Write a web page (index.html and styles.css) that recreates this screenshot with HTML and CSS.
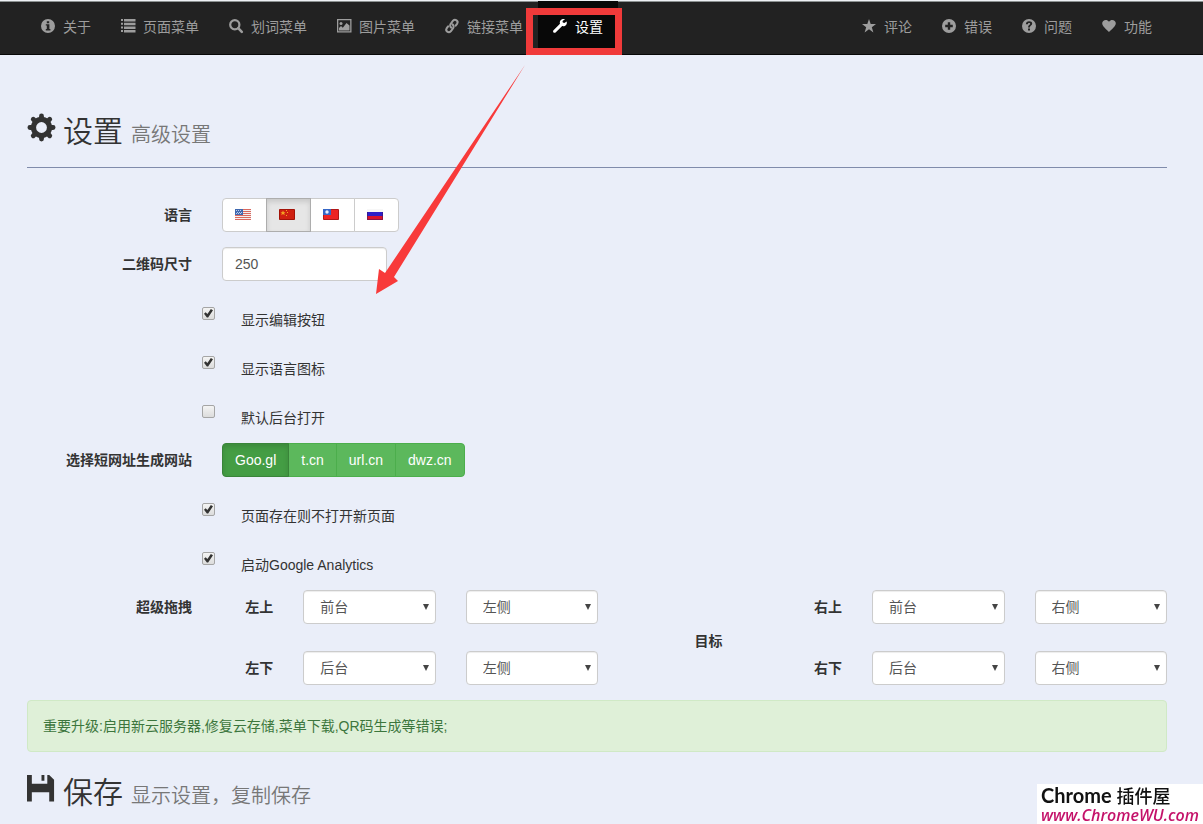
FILE: index.html
```html
<!DOCTYPE html>
<html lang="zh-CN">
<head>
<meta charset="utf-8">
<title>设置</title>
<link rel="stylesheet" href="styles.css">
</head>
<body>
<nav class="navbar">
  <div class="nav-list">
    <a class="nav-link" href="#about"><svg class="icon" viewBox="0 0 14 14"><path fill-rule="evenodd" d="M7 0a7 7 0 1 1 0 14A7 7 0 0 1 7 0zM5.800 2.200v2h2.400v-2zM4.800 5.300v1.200h1v3.600h-1v1.300h4.600v-1.300h-1V5.300z"/></svg>关于</a>
    <a class="nav-link" href="#page"><svg class="icon" viewBox="0 0 14 14"><path d="M0 0h2v2H0zM3 0h11.500v2.500H3zM0 3.700h2v2H0zM3 3.700h11.500v2.500H3zM0 7.400h2v2H0zM3 7.400h11.500v2.500H3zM0 11h2v2H0zM3 11h11.500v2.500H3z"/></svg>页面菜单</a>
    <a class="nav-link" href="#select"><svg class="icon" viewBox="0 0 14 14"><circle cx="5.800" cy="5.800" r="4.600" fill="none" stroke="currentColor" stroke-width="2.200"/><path d="M9.200 9.200l3.600 3.600" fill="none" stroke="currentColor" stroke-width="2.600" stroke-linecap="round"/></svg>划词菜单</a>
    <a class="nav-link" href="#image"><svg class="icon" viewBox="0 0 14 14"><path fill-rule="evenodd" d="M0 0h14.500v13.500H0zM1.300 1.300v10.900h11.900V1.300z"/><circle cx="4" cy="4.500" r="1.500"/><path d="M2 11.500V9l2-2 1.800 1.700L9.500 4l3 2.600v4.900z"/></svg>图片菜单</a>
    <a class="nav-link" href="#link"><svg class="icon" viewBox="0 0 14 14"><g fill="none" stroke="currentColor" stroke-width="2" stroke-linecap="round"><path d="M6.300 8.600C4.600 7.300 5 5.500 6 4.300l2-2.600c2.300-2.200 5.700.4 4.200 2.900L10.700 6.700"/><path d="M7.500 5.400C9.200 6.700 8.800 8.500 7.800 9.700l-2 2.600c-2.300 2.200-5.700-.4-4.200-2.900L3.100 7.300"/></g></svg>链接菜单</a>
    <a class="nav-link active" href="#settings"><svg class="icon" viewBox="0 0 14 14"><path d="M13.700 2.400l-2.400 1.700-1.500-.5-.3-1.600L12 .3C10.300-.4 8.200.2 7.300 1.800c-.6 1-.6 2-.3 3L.5 11.300c-.6.6-.6 1.500 0 2.100s1.500.6 2.100 0L9.200 7c2.600.8 5.300-1.400 4.500-4.600z"/></svg>设置</a>
  </div>
  <div class="nav-list">
    <a class="nav-link" href="#review"><svg class="icon" viewBox="0 0 14 14"><path d="M7 0l1.700 5H14L9.800 8.200l1.600 5.200L7 10.300l-4.400 3.100 1.600-5.200L0 5h5.300z"/></svg>评论</a>
    <a class="nav-link" href="#bug"><svg class="icon" viewBox="0 0 14 14"><path fill-rule="evenodd" d="M7 0a7 7 0 1 1 0 14A7 7 0 0 1 7 0zM5.800 3.200v2.600H3.200v2.400h2.600v2.600h2.400V8.200h2.600V5.800H8.200V3.200z"/></svg>错误</a>
    <a class="nav-link" href="#question"><svg class="icon" viewBox="0 0 14 14"><path fill-rule="evenodd" d="M7 0a7 7 0 1 1 0 14A7 7 0 0 1 7 0zM3.900 5.300h2c0-1 .5-1.400 1.200-1.400.8 0 1.100.4 1.100.9 0 1.100-2.200 1.300-2.200 3.600h1.900c0-1.500 2.300-1.800 2.300-3.800C10.200 3 8.900 2.200 7.100 2.200c-2 0-3.200 1.200-3.200 3.100zM6 9.500v2h2v-2z"/></svg>问题</a>
    <a class="nav-link" href="#feature"><svg class="icon" viewBox="0 0 14 14"><path d="M7 13C4.500 10.500.2 7.500.2 4.300.2 1 4.800-.3 7 2.700 9.200-.3 13.800 1 13.800 4.300 13.800 7.500 9.500 10.500 7 13z"/></svg>功能</a>
  </div>
</nav>

<main class="page">
  <h2 class="title ruled"><svg class="title-icon" viewBox="0 0 30 30"><g fill="none" stroke="currentColor"><circle cx="15" cy="15" r="8.300" stroke-width="5.400"/><path stroke-width="5" stroke-linecap="round" d="M15 5V3M15 25v2M5 15H3M25 15h2M7.900 7.900L6.500 6.500M22.100 22.100l1.400 1.400M7.900 22.100l-1.400 1.400M22.100 7.900l1.400-1.400"/></g></svg>设置<small>高级设置</small></h2>

  <form class="form">
    <div class="row">
      <span class="row-label" id="lang-label">语言</span>
      <div class="wide btn-group" role="group" aria-labelledby="lang-label">
        <button type="button" class="btn" aria-label="English"><svg class="flag" viewBox="0 0 16 11"><path fill="#f4efef" d="M0 0h16v11H0z"/><path stroke="#d9695f" d="M0 .5h16M0 2.500h16M0 4.500h16M0 6.500h16M0 8.500h16M0 10.500h16"/><path fill="#3f68b0" d="M0 0h8v6H0z"/><path stroke="#b9cdec" stroke-dasharray="1 1" d="M1 1.500h6M2 3.500h5M1 4.500h6"/></svg></button>
        <button type="button" class="btn pressed" aria-label="简体中文" aria-pressed="true"><svg class="flag" viewBox="0 0 16 11"><path fill="#cf2011" stroke="#a31207" d="M.5.500h15v10H.5z"/><path fill="#f5a623" d="M4 1.500l.8 1.700h1.700L5.200 4.300l.5 1.900L4 5.100 2.300 6.200l.5-1.900L1.500 3.200h1.700z"/><path fill="#f5a623" d="M7 1h1v1H7zM8 3h1v1H8zM7 6h1v1H7z"/></svg></button>
        <button type="button" class="btn" aria-label="繁體中文"><svg class="flag" viewBox="0 0 16 11"><path fill="#ed2424" stroke="#b01818" d="M.5.500h15v10H.5z"/><path fill="#3566c6" d="M0 0h8v6H0z"/><circle cx="4" cy="3" r="1.700" fill="#e8f0ff"/></svg></button>
        <button type="button" class="btn" aria-label="Русский"><svg class="flag" viewBox="0 0 16 11"><path fill="#f7f7f7" d="M0 0h16v3H0z"/><path fill="#2c20c8" d="M0 3h16v4H0z"/><path fill="#d8142c" d="M0 7h16v4H0z"/><path fill="none" stroke="#3c1460" stroke-opacity=".5" d="M.5 3v7.500h15V3"/></svg></button>
      </div>
    </div>
    <div class="row">
      <label class="row-label" for="qr">二维码尺寸</label>
      <div class="narrow"><input class="control" id="qr" type="text" value="250"></div>
    </div>
    <div class="row"><label class="wide check"><input type="checkbox" checked><span>显示编辑按钮</span></label></div>
    <div class="row"><label class="wide check"><input type="checkbox" checked><span>显示语言图标</span></label></div>
    <div class="row"><label class="wide check"><input type="checkbox"><span>默认后台打开</span></label></div>
    <div class="row">
      <span class="row-label" id="short-label">选择短网址生成网站</span>
      <div class="wide btn-group" role="group" aria-labelledby="short-label">
        <button type="button" class="btn green pressed" aria-pressed="true">Goo.gl</button>
        <button type="button" class="btn green">t.cn</button>
        <button type="button" class="btn green">url.cn</button>
        <button type="button" class="btn green">dwz.cn</button>
      </div>
    </div>
    <div class="row"><label class="wide check"><input type="checkbox" checked><span>页面存在则不打开新页面</span></label></div>
    <div class="row"><label class="wide check"><input type="checkbox" checked><span>启动Google Analytics</span></label></div>
    <div class="row">
      <span class="row-label">超级拖拽</span>
      <div class="drag">
        <label class="row-label corner" for="lt">左上</label>
        <div class="pick"><select class="control" id="lt"><option>前台</option><option>后台</option></select></div>
        <div class="pick"><select class="control" aria-label="左上位置"><option>左侧</option><option>右侧</option></select></div>
        <span class="target">目标</span>
        <label class="row-label corner right" for="rt">右上</label>
        <div class="pick"><select class="control" id="rt"><option>前台</option><option>后台</option></select></div>
        <div class="pick"><select class="control" aria-label="右上位置"><option>右侧</option><option>左侧</option></select></div>
        <label class="row-label corner" for="lb">左下</label>
        <div class="pick"><select class="control" id="lb"><option>后台</option><option>前台</option></select></div>
        <div class="pick"><select class="control" aria-label="左下位置"><option>左侧</option><option>右侧</option></select></div>
        <label class="row-label corner right" for="rb">右下</label>
        <div class="pick"><select class="control" id="rb"><option>后台</option><option>前台</option></select></div>
        <div class="pick"><select class="control" aria-label="右下位置"><option>右侧</option><option>左侧</option></select></div>
      </div>
    </div>
  </form>

  <div class="alert">重要升级:启用新云服务器,修复云存储,菜单下载,QR码生成等错误;</div>

  <h2 class="title"><svg class="title-icon" viewBox="0 0 30 30"><path fill-rule="evenodd" d="M0 1h5v9h16V1h2l5 5v22.500h-5V19H5v9.500H0zM15 1h3v6h-3z"/></svg>保存<small>显示设置，复制保存</small></h2>
</main>

<div class="frame"></div>
<svg class="arrow" viewBox="0 0 150 230"><path fill="#f83a3a" d="M149 1L18 213l4 4L0 230l3-25 6 4z"/></svg>
<div class="watermark">
  <div class="mark-name">Chrome <span>插件屋</span></div>
  <div class="mark-url">www.ChromeWU.com</div>
</div>
</body>
</html>
```

FILE: styles.css
```css
* { box-sizing: border-box; }

body {
  margin: 0;
  background: #eaeef9;
  color: #333;
  font: 14px/20px "Liberation Sans", "Noto Sans CJK SC", sans-serif;
}

button, input, select { font: inherit; color: inherit; margin: 0; }

/* navigation */
.navbar {
  display: flex;
  justify-content: space-between;
  padding: 0 36px 0 26px;
  background: #222;
  border-top: 1px solid #eef1f5;
  border-bottom: 1px solid #080808;
  box-shadow: inset 0 1px #8d9292;
}
.nav-list { display: flex; }
.nav-link {
  display: flex;
  align-items: center;
  gap: 8px;
  padding: 16px 15px 17px;
  color: #9d9d9d;
  text-decoration: none;
  white-space: nowrap;
}
.nav-link.active { background: #080808; color: #fff; }
.icon { width: 14px; height: 14px; margin-bottom: 2px; fill: currentColor; overflow: visible; }

/* headings */
.page { padding: 60px 36px 0 27px; }
.title {
  display: flex;
  align-items: baseline;
  margin: 0;
  font-size: 30px;
  line-height: 33px;
  font-weight: 350;
}
.title small { margin-left: 8px; font-size: 20px; color: #777; }
.title-icon {
  width: 29px;
  height: 29px;
  margin-right: 7px;
  align-self: flex-start;
  margin-top: -2px;
  fill: currentColor;
}
.ruled { padding-bottom: 15px; margin-bottom: 30px; border-bottom: 1px solid #808bab; }

/* form grid */
.form { margin: 0 -15px; }
.row {
  display: grid;
  grid-template-columns: repeat(12, minmax(0, 1fr));
  min-height: 34px;
  margin-bottom: 15px;
}
.row-label {
  grid-column: span 2;
  padding: 7px 15px 0 0;
  font-weight: 700;
  text-align: right;
  white-space: nowrap;
}
.wide { grid-column: 3 / -1; padding: 0 15px; }
.narrow { grid-column: span 2; padding: 0 15px; }

.control {
  display: block;
  width: 100%;
  height: 34px;
  padding: 6px 12px;
  background: #fff;
  border: 1px solid #ccc;
  border-radius: 4px;
  box-shadow: inset 0 1px 1px rgba(0, 0, 0, .075);
  color: #555;
}

.btn-group { display: flex; }
.btn {
  display: flex;
  align-items: center;
  height: 34px;
  padding: 0 12px;
  background: #fff;
  border: 1px solid #ccc;
}
.btn + .btn { margin-left: -1px; }
.btn:first-child { border-radius: 4px 0 0 4px; }
.btn:last-child { border-radius: 0 4px 4px 0; }
.btn.pressed {
  position: relative;
  background: #e6e6e6;
  border-color: #adadad;
  box-shadow: inset 0 3px 5px rgba(0, 0, 0, .125);
}
.flag { width: 16px; height: 11px; margin-bottom: 1px; }
.btn:has(.flag) { width: 45px; }
.btn.green { background: #5cb85c; border-color: #4cae4c; color: #fff; }
.btn.green.pressed { background: #449d44; border-color: #398439; }

.check { display: flex; gap: 26px; padding-left: 0; margin-left: -5px; }
.check span { padding-top: 14px; }
.check input {
  appearance: none;
  width: 13px;
  height: 13px;
  margin-top: 11px;
  background: linear-gradient(#f4f4f4, #dcdcdc);
  border: 1px solid #a5a5a5;
  border-radius: 2px;
}
.check input:checked::before {
  content: "";
  display: block;
  width: 9px;
  height: 9px;
  margin: 1px;
  background: #333;
  clip-path: polygon(0 52%, 18% 36%, 38% 56%, 76% 0, 100% 14%, 46% 94%, 32% 94%);
}

/* drag settings */
.drag {
  grid-column: 3 / -1;
  display: grid;
  grid-template-columns: repeat(12, minmax(0, 1fr));
  row-gap: 27px;
}
.corner { grid-column: span 1; }
.corner.right { grid-column: 8; }
.pick { position: relative; grid-column: span 2; padding: 0 15px; }
.pick select { appearance: none; padding: 6px 16px; }
.pick::after {
  content: "";
  position: absolute;
  top: 14px;
  right: 22px;
  border: solid transparent;
  border-width: 6px 3px 0;
  border-top-color: #444;
  pointer-events: none;
}
.target {
  grid-area: 1 / 7 / 3 / 8;
  align-self: center;
  padding-top: 7px;
  font-weight: 700;
}

.alert {
  padding: 15px;
  margin-bottom: 24px;
  background: #dff0d8;
  border: 1px solid #d0e9c6;
  border-radius: 4px;
  color: #3c763d;
}

/* annotations */
.frame {
  position: absolute;
  top: 8px;
  left: 526px;
  width: 96px;
  height: 47px;
  border: 7px solid #f03a3a;
}
.arrow { position: absolute; top: 64px; left: 376px; width: 150px; height: 230px; pointer-events: none; }
.watermark {
  position: fixed;
  right: 0;
  bottom: 0;
  padding: 1px 4px 0;
  background: #fff;
  white-space: nowrap;
}
.mark-name { font: 700 20px/20px Lato, "Noto Sans CJK SC", sans-serif; color: #111; }
.mark-name span { font-size: 18px; font-weight: 500; }
.mark-url { font: italic 600 16px/18px "Open Sans", sans-serif; color: #c4126a; }
```
